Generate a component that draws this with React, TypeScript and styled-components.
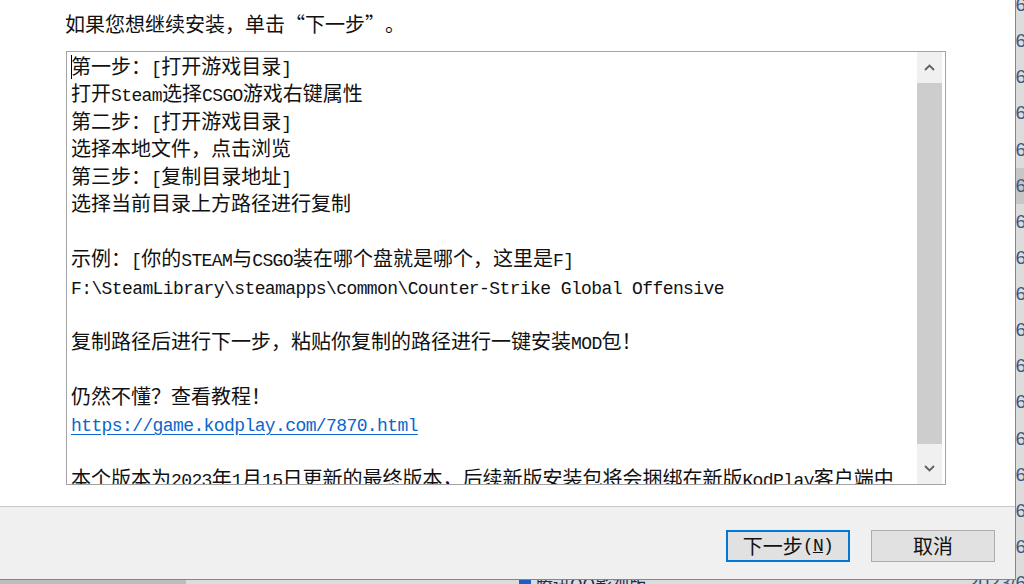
import React from 'react';
import styled, { createGlobalStyle } from 'styled-components';

const Global = createGlobalStyle`
  html, body { margin: 0; padding: 0; width: 1024px; height: 584px; overflow: hidden; background: #dedede; }
  #root { width: 1024px; height: 584px; }
`;

const Screen = styled.div`
  position: relative;
  width: 1024px;
  height: 584px;
  overflow: hidden;
  font-family: "Noto Sans CJK SC", sans-serif;
`;

/* ---------- background explorer window ---------- */
const Explorer = styled.div`
  position: absolute;
  inset: 0;
  display: flex;
`;
const NavPane = styled.div`
  width: 186px;
  flex: none;
  background: #bdbdbd;
`;
const FileList = styled.div`
  flex: 1;
  display: flex;
  flex-direction: column;
  margin-top: -13px;
  background: #dcdcdc;
`;
const FileRow = styled.div<{ $selected?: boolean }>`
  height: 36.125px;
  flex: none;
  display: grid;
  grid-template-columns: 333px 449px 1fr;
  align-items: center;
  background: ${(p) => (p.$selected ? '#c6c6c6' : 'transparent')};
  font-family: "Noto Sans CJK SC", sans-serif;
  font-size: 17px;
  white-space: nowrap;
`;
const FileName = styled.span`
  grid-column: 2;
  display: flex;
  align-items: center;
  gap: 5px;
  color: #1c2a4a;
`;
const FileIcon = styled.span`
  width: 12px;
  height: 12px;
  border-radius: 3px;
  background: #1f5fbf;
`;
const FileDate = styled.span`
  grid-column: 3;
  font-family: "Liberation Sans", sans-serif;
  font-size: 19px;
  color: #3d5a86;
`;

/* ---------- dialog ---------- */
const Dialog = styled.div`
  position: absolute;
  left: 0;
  top: 0;
  width: 1016px;
  height: 580px;
  box-sizing: border-box;
  border-right: 1px solid #858585;
  border-bottom: 1px solid #858585;
  display: flex;
  flex-direction: column;
  background: #ffffff;
`;
const Body = styled.div`
  height: 506px;
  flex: none;
  box-sizing: border-box;
  padding: 10px 0 0 65px;
  background: #ffffff;
`;
const Heading = styled.div`
  font-size: 20px;
  line-height: 27.5px;
  height: 27.5px;
  color: #111;
  white-space: pre;
`;
const Quote = styled.span<{ $open?: boolean }>`
  display: inline-block;
  width: 20px;
  text-align: ${(p) => (p.$open ? 'right' : 'left')};
`;
const TextBox = styled.div`
  margin: 13px 0 0 1px;
  width: 880px;
  height: 434px;
  box-sizing: border-box;
  border: 1px solid #a3a3a3;
  display: flex;
  background: #ffffff;
`;
const TextArea = styled.div`
  flex: 1;
  overflow: hidden;
  padding-left: 4px;
  font-size: 20px;
  line-height: 27.5px;
  color: #111;
`;
const Line = styled.div`
  height: 27.5px;
  white-space: pre;
`;
const Latin = styled.span`
  font-family: "Liberation Mono", monospace;
  font-size: 18px;
  letter-spacing: -0.6px;
`;
const Link = styled.span`
  font-family: "Liberation Mono", monospace;
  font-size: 18px;
  letter-spacing: -0.6px;
  color: #0a66cc;
  text-decoration: underline;
  text-underline-offset: 3px;
`;
const Caret = styled.span`
  display: inline-block;
  width: 1px;
  height: 24px;
  margin-right: -1px;
  background: #000;
  vertical-align: -5px;
`;
const ScrollBar = styled.div`
  width: 25px;
  flex: none;
  margin-right: 3px;
  display: flex;
  flex-direction: column;
  background: #f0f0f0;
`;
const ScrollButton = styled.div`
  height: 31px;
  flex: none;
  display: flex;
  align-items: center;
  justify-content: center;
`;
const Thumb = styled.div`
  height: 361px;
  flex: none;
  background: #cdcdcd;
`;
const Track = styled.div`
  flex: 1;
`;

const Footer = styled.div`
  flex: 1;
  border-top: 1px solid #c8c8c8;
  background: #f0f0f0;
  display: flex;
  justify-content: flex-end;
  align-items: flex-start;
  gap: 21px;
  padding: 23px 20px 0 0;
`;
const Button = styled.button<{ $default?: boolean }>`
  width: 124px;
  height: 32px;
  box-sizing: border-box;
  padding: 0;
  background: #e1e1e1;
  border: ${(p) => (p.$default ? '2px solid #0078d7' : '1px solid #adadad')};
  font-family: "Noto Sans CJK SC", sans-serif;
  font-size: 20px;
  line-height: 1;
  color: #111;
  display: flex;
  align-items: center;
  justify-content: center;
`;

const isLatin = (s: string) => /^[\x20-\x7E]+$/.test(s);
const Txt = ({ t }: { t: string }) => (
  <>
    {t
      .split(/([\x20-\x7E]+)/)
      .filter(Boolean)
      .map((p, i) => (isLatin(p) ? <Latin key={i}>{p}</Latin> : <React.Fragment key={i}>{p}</React.Fragment>))}
  </>
);

const Chevron = ({ up }: { up?: boolean }) => (
  <svg width="11" height="7" viewBox="0 0 11 7">
    <path
      d={up ? 'M1 6 L5.5 1.5 L10 6' : 'M1 1 L5.5 5.5 L10 1'}
      fill="none"
      stroke="#606060"
      strokeWidth="1.8"
    />
  </svg>
);

const lines = [
  '第一步：[打开游戏目录]',
  '打开Steam选择CSGO游戏右键属性',
  '第二步：[打开游戏目录]',
  '选择本地文件，点击浏览',
  '第三步：[复制目录地址]',
  '选择当前目录上方路径进行复制',
  '',
  '示例：[你的STEAM与CSGO装在哪个盘就是哪个，这里是F]',
  'F:\\SteamLibrary\\steamapps\\common\\Counter-Strike Global Offensive',
  '',
  '复制路径后进行下一步，粘贴你复制的路径进行一键安装MOD包！',
  '',
  '仍然不懂？查看教程！',
  'LINK',
  '',
  '本个版本为2023年1月15日更新的最终版本，后续新版安装包将会捆绑在新版KodPlay客户端中',
];

export default function App() {
  const rows = Array.from({ length: 17 }, (_, i) => i);
  return (
    <Screen>
      <Global />
      <Explorer>
        <NavPane />
        <FileList>
          {rows.map((i) => (
            <FileRow key={i} $selected={i === 5}>
              <FileName>
                <FileIcon />
                腾讯QQ影视版
              </FileName>
              <FileDate>2023/6/15 10:22</FileDate>
            </FileRow>
          ))}
        </FileList>
      </Explorer>

      <Dialog>
        <Body>
          <Heading>
            如果您想继续安装，单击<Quote $open>“</Quote>下一步<Quote>”</Quote>。
          </Heading>
          <TextBox>
            <TextArea>
              {lines.map((l, i) => (
                <Line key={i}>
                  {i === 0 && <Caret />}
                  {l === 'LINK' ? <Link>https://game.kodplay.com/7870.html</Link> : <Txt t={l} />}
                </Line>
              ))}
            </TextArea>
            <ScrollBar>
              <ScrollButton>
                <Chevron up />
              </ScrollButton>
              <Thumb />
              <Track />
              <ScrollButton>
                <Chevron />
              </ScrollButton>
            </ScrollBar>
          </TextBox>
        </Body>
        <Footer>
          <Button $default>
            下一步<Latin>(<u>N</u>)</Latin>
          </Button>
          <Button>取消</Button>
        </Footer>
      </Dialog>
    </Screen>
  );
}
